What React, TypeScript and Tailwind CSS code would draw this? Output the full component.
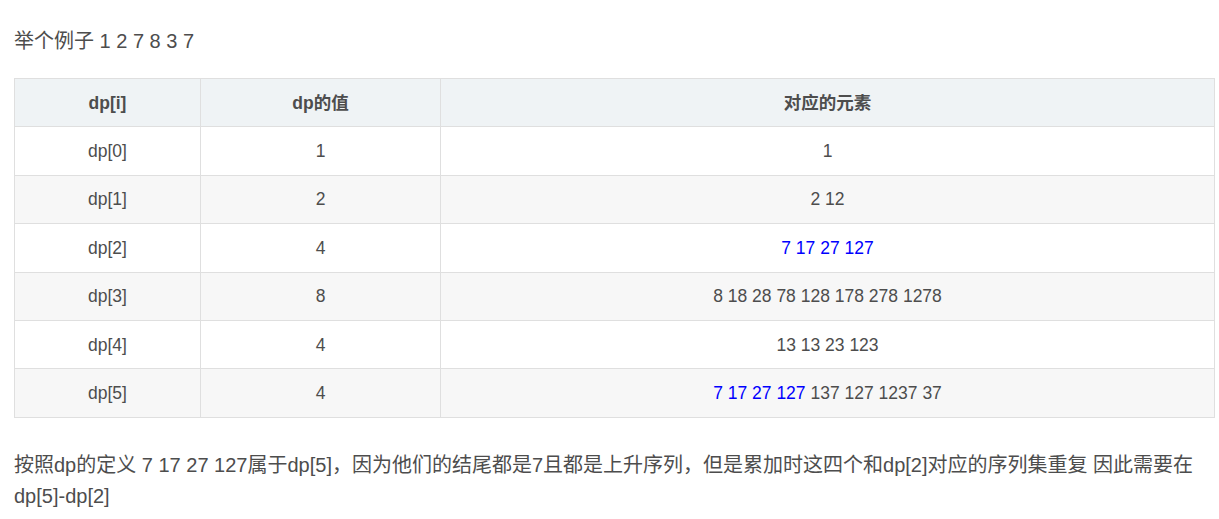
import React from 'react';

interface Row {
  key: string;
  value: string;
  blue?: string;
  rest?: string;
}

const ROWS: Row[] = [
  { key: 'dp[0]', value: '1', rest: '1' },
  { key: 'dp[1]', value: '2', rest: '2 12' },
  { key: 'dp[2]', value: '4', blue: '7 17 27 127' },
  { key: 'dp[3]', value: '8', rest: '8 18 28 78 128 178 278 1278' },
  { key: 'dp[4]', value: '4', rest: '13 13 23 123' },
  { key: 'dp[5]', value: '4', blue: '7 17 27 127', rest: '137 127 1237 37' },
];

const cell = 'border border-[#dfdfdf] text-center align-middle h-[48.4px] p-0';

export default function App() {
  return (
    <div
      className="min-h-screen bg-white pl-[14px] pr-[4px] text-[#4d4d4d]"
      style={{ fontFamily: '"Liberation Sans", Arial, "Noto Sans CJK SC", sans-serif' }}
    >
      <p className="pt-[26px] text-[20px] leading-[31px]">举个例子 1 2 7 8 3 7</p>

      <table className="mt-[21px] w-[1201px] border-collapse text-[17.5px]">
        <thead>
          <tr className="bg-[#eff3f5]">
            <th className={`${cell} w-[186px] font-bold`}>dp[i]</th>
            <th className={`${cell} w-[240px] font-bold`}>dp的值</th>
            <th className={`${cell} font-bold`}>对应的元素</th>
          </tr>
        </thead>
        <tbody>
          {ROWS.map((row, i) => (
            <tr key={row.key} className={i % 2 === 1 ? 'bg-[#f7f7f7]' : 'bg-white'}>
              <td className={cell}>{row.key}</td>
              <td className={cell}>{row.value}</td>
              <td className={cell}>
                {row.blue && <span className="text-[#0000ff]">{row.blue}</span>}
                {row.blue && row.rest ? ' ' : ''}
                {row.rest}
              </td>
            </tr>
          ))}
        </tbody>
      </table>

      <p className="mt-[32px] w-[1201px] text-[20px] leading-[31px]">
        按照dp的定义 7 17 27 127属于dp[5]，因为他们的结尾都是7且都是上升序列，但是累加时这四个和dp[2]对应的序列集重复 因此需要在dp[5]-dp[2]
      </p>
    </div>
  );
}
